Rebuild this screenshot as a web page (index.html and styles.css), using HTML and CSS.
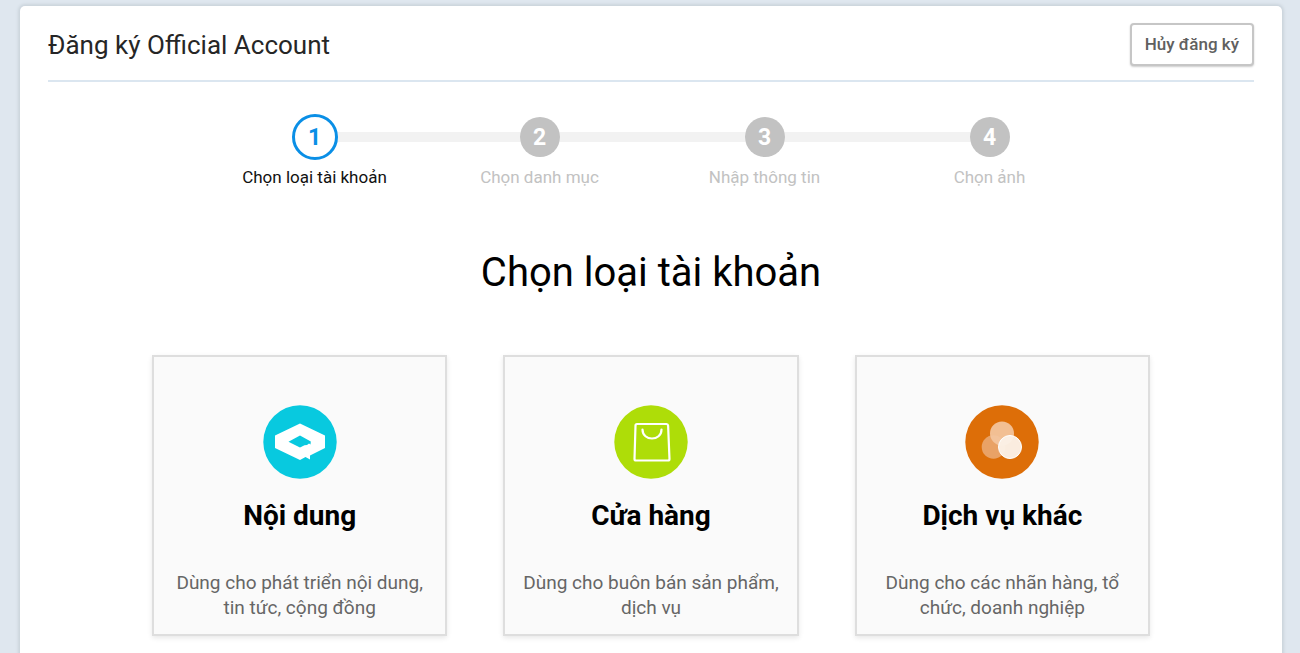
FILE: index.html
```html
<!DOCTYPE html>
<html lang="vi">
<head>
<meta charset="utf-8">
<meta name="viewport" content="width=device-width, initial-scale=1">
<title>Đăng ký Official Account</title>
<link rel="stylesheet" href="styles.css">
</head>
<body>
<main class="panel">
  <header class="panel-header">
    <h1 class="panel-title">Đăng ký Official Account</h1>
    <button type="button" class="cancel">Hủy đăng ký</button>
  </header>

  <ol class="steps">
    <li class="step step-active" aria-current="step">
      <div class="track"><span class="marker">1</span></div>
      <span class="step-label">Chọn loại tài khoản</span>
    </li>
    <li class="step">
      <div class="track"><span class="marker">2</span></div>
      <span class="step-label">Chọn danh mục</span>
    </li>
    <li class="step">
      <div class="track"><span class="marker">3</span></div>
      <span class="step-label">Nhập thông tin</span>
    </li>
    <li class="step">
      <div class="track"><span class="marker">4</span></div>
      <span class="step-label">Chọn ảnh</span>
    </li>
  </ol>

  <h2 class="heading">Chọn loại tài khoản</h2>

  <div class="cards">
    <a class="card" href="#noi-dung">
      <svg class="card-icon" viewBox="0 0 74 74" aria-hidden="true">
        <circle cx="37" cy="37" r="36.7" fill="#08c9df"/>
        <path fill="#fff" fill-rule="evenodd" d="M37 18.500 62 30.500V43L47 50.500V54.500L42.500 52 37 55 12 43V30.500ZM37 30.500 25.500 36.800 37 42.500 41.500 40.200 44 40 46 38.500 47.500 39.500 47.800 36.500Z"/>
      </svg>
      <h3 class="card-title">Nội dung</h3>
      <p class="card-text">Dùng cho phát triển nội dung, tin tức, cộng đồng</p>
    </a>
    <a class="card" href="#cua-hang">
      <svg class="card-icon" viewBox="0 0 74 74" aria-hidden="true">
        <circle cx="37" cy="37" r="36.7" fill="#aedd08"/>
        <g fill="none" stroke="#fff" stroke-width="2.2" stroke-linecap="round" stroke-linejoin="round">
          <path d="M23 19H52.500Q54 19 54.100 20.500L55.500 54Q55.500 55.500 54 55.500H22Q20.500 55.500 20.500 54L21.500 20.500Q21.500 19 23 19Z"/>
          <path d="M28.500 24.500C28.500 36.500 47.500 36.500 47.500 24.500"/>
        </g>
      </svg>
      <h3 class="card-title">Cửa hàng</h3>
      <p class="card-text">Dùng cho buôn bán sản phẩm, dịch vụ</p>
    </a>
    <a class="card" href="#dich-vu-khac">
      <svg class="card-icon" viewBox="0 0 74 74" aria-hidden="true">
        <circle cx="37" cy="37" r="36.7" fill="#dd6e08"/>
        <circle cx="28.500" cy="42" r="11.800" fill="#e9a266"/>
        <circle cx="37" cy="28.500" r="12" fill="#f3c69f" fill-opacity=".92"/>
        <circle cx="45" cy="42" r="11.500" fill="#fbf1e6" fill-opacity=".97" stroke="#fff"/>
      </svg>
      <h3 class="card-title">Dịch vụ khác</h3>
      <p class="card-text">Dùng cho các nhãn hàng, tổ chức, doanh nghiệp</p>
    </a>
  </div>
</main>
</body>
</html>
```
FILE: styles.css
```css
* {
  box-sizing: border-box;
}

body {
  margin: 0;
  background: #dfe7ef;
  color: #000;
  font-family: Roboto, "Noto Sans", sans-serif;
  font-size: 17px;
  line-height: 25px;
  display: flow-root;
}

h1,
h2,
h3,
p,
ol {
  margin: 0;
  padding: 0;
}

.panel {
  margin: 6px 18px 0 20px;
  min-height: calc(100vh - 6px);
  padding: 0 28px 17px;
  background: #fff;
  border-radius: 5px 5px 0 0;
  box-shadow: 0 0 3px 2px #cbd4dc;
}

.panel-header {
  display: flex;
  align-items: center;
  justify-content: space-between;
  height: 76px;
  padding-top: 3px;
  border-bottom: 2px solid #dbe6f0;
}

.panel-title {
  color: #262626;
  font-size: 26px;
  font-weight: 400;
  line-height: 32px;
}

.cancel {
  padding: 7px 13px 8px;
  border: 2px solid #c6c6c6;
  border-radius: 4px;
  background: #fff;
  box-shadow: 0 1px 2px #ccc;
  color: #606060;
  font: 500 17px/24px Roboto, "Noto Sans", sans-serif;
}

.steps {
  display: grid;
  grid-template-columns: repeat(4, minmax(0, 225px));
  justify-content: center;
  margin-top: 32px;
  padding-left: 2px;
  list-style: none;
  text-align: center;
}

.track {
  display: flex;
  align-items: center;
  height: 46px;
}

.track::before,
.track::after {
  content: "";
  flex: 1;
  height: 10px;
  background: #f2f2f2;
}

.step:first-child .track::before,
.step:last-child .track::after {
  background: none;
}

.marker {
  width: 40px;
  height: 40px;
  border-radius: 50%;
  background: #c2c2c2;
  color: #fff;
  font-size: 23px;
  font-weight: 700;
  line-height: 42px;
}

.step-active .marker {
  width: 46px;
  height: 46px;
  border: 3px solid #0a8fe6;
  background: #fff;
  color: #0a8fe6;
}

.step-label {
  display: block;
  margin-top: 5px;
  color: #c2c2c2;
}

.step-active .step-label {
  color: #111;
}

.heading {
  margin-top: 58px;
  font-size: 40px;
  font-weight: 400;
  line-height: 50px;
  text-align: center;
}

.cards {
  display: grid;
  grid-template-columns: repeat(3, minmax(0, 1fr));
  gap: 56px;
  max-width: 998px;
  margin: 57px auto 0;
}

.card {
  display: flex;
  flex-direction: column;
  align-items: center;
  padding: 48px 16px 14px;
  border: 2px solid #dedede;
  background: #fafafa;
  box-shadow: 0 2px 5px #e8e8e8;
  color: inherit;
  text-align: center;
  text-decoration: none;
}

.card-icon {
  width: 74px;
  height: 74px;
}

.card-title {
  margin-top: 20px;
  font-size: 28px;
  font-weight: 700;
  line-height: 34px;
}

.card-text {
  margin-top: 37px;
  color: #666;
  font-size: 19px;
}
```
